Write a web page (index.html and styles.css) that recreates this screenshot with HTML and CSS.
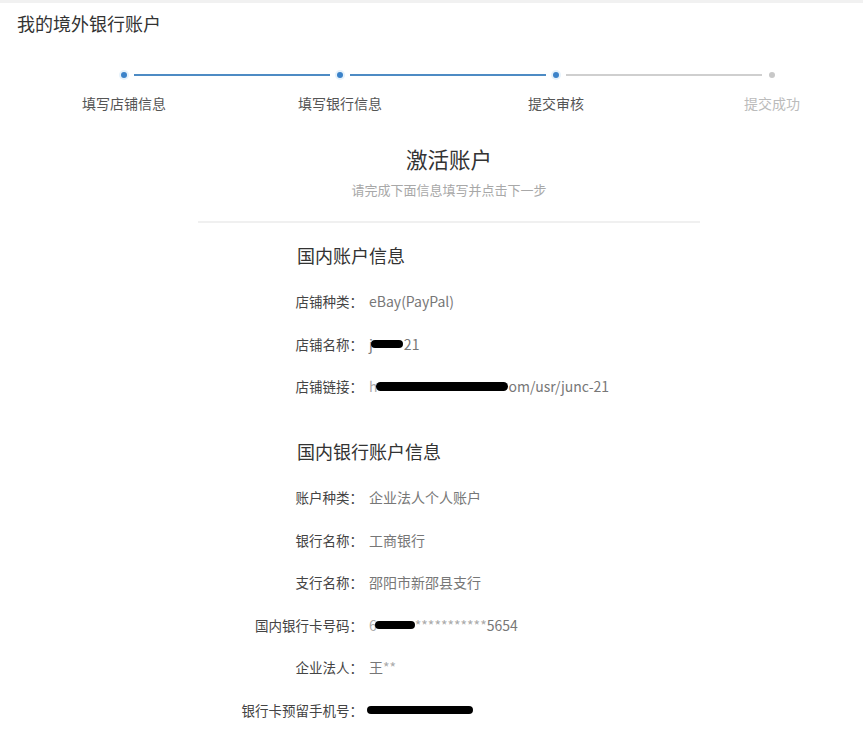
FILE: index.html
```html
<!DOCTYPE html>
<html lang="zh-CN">
<head>
<meta charset="utf-8">
<title>我的境外银行账户</title>
<link rel="stylesheet" href="styles.css">
</head>
<body>
<div class="page">
  <header class="page-head">我的境外银行账户</header>

  <div class="steps">
    <div class="track">
      <span class="dot done"></span>
      <span class="seg done"></span>
      <span class="dot done"></span>
      <span class="seg done"></span>
      <span class="dot done"></span>
      <span class="seg"></span>
      <span class="dot"></span>
    </div>
    <div class="labels">
      <span class="label">填写店铺信息</span>
      <span class="label">填写银行信息</span>
      <span class="label">提交审核</span>
      <span class="label todo">提交成功</span>
    </div>
  </div>

  <main class="main">
    <h1 class="title">激活账户</h1>
    <p class="subtitle">请完成下面信息填写并点击下一步</p>
    <div class="divider"></div>

    <section class="block">
      <h2 class="block-title">国内账户信息</h2>
      <div class="row"><span class="k">店铺种类：</span><span class="v">eBay(PayPal)</span></div>
      <div class="row"><span class="k">店铺名称：</span><span class="v">j<span class="blot b-name"></span>21</span></div>
      <div class="row"><span class="k">店铺链接：</span><span class="v"><span class="faint">h</span><span class="blot b-link"></span>om/usr/junc-21</span></div>
    </section>

    <section class="block second">
      <h2 class="block-title">国内银行账户信息</h2>
      <div class="row"><span class="k">账户种类：</span><span class="v">企业法人个人账户</span></div>
      <div class="row"><span class="k">银行名称：</span><span class="v">工商银行</span></div>
      <div class="row"><span class="k">支行名称：</span><span class="v">邵阳市新邵县支行</span></div>
      <div class="row"><span class="k">国内银行卡号码：</span><span class="v"><span class="faint">6</span><span class="blot b-card"></span><span class="stars">***********</span>5654</span></div>
      <div class="row"><span class="k">企业法人：</span><span class="v">王<span class="stars">**</span></span></div>
      <div class="row"><span class="k">银行卡预留手机号：</span><span class="v"><span class="blot b-phone"></span></span></div>
    </section>
  </main>
</div>
</body>
</html>
```
FILE: styles.css
```css
* { box-sizing: border-box; }
html, body { margin: 0; padding: 0; background: #fff; }
body {
  font-family: "Noto Sans CJK SC", "Microsoft YaHei", sans-serif;
  color: #333;
  width: 863px;
  height: 753px;
  overflow: hidden;
}
.page { border-top: 3px solid #f1f1f1; }

.page-head {
  font-size: 18px;
  line-height: 24px;
  padding: 8px 0 0 17px;
  color: #333;
  height: 40px;
}

.steps { margin-top: 28px; }
.track {
  display: flex;
  align-items: center;
  margin-left: 121px;
  width: 654px;
  height: 8px;
}
.dot {
  width: 6px;
  height: 6px;
  border-radius: 50%;
  background: #c8c8c8;
  flex: none;
}
.dot.done { background: #3b82c9; box-shadow: 0 0 0 2px #e6f2fb; }
.seg {
  flex: 1;
  height: 2px;
  margin: 0 7px;
  background: #cfcfcf;
}
.seg.done { background: #4d8bc4; }

.labels {
  display: grid;
  grid-template-columns: repeat(4, 216px);
  margin-left: 16px;
  margin-top: 14px;
  font-size: 14px;
  line-height: 20px;
  color: #555;
}
.label { text-align: center; white-space: nowrap; }
.label.todo { color: #bbb; }

.main {
  margin-left: 198px;
  width: 502px;
  margin-top: 31px;
}
.title {
  margin: 0;
  text-align: center;
  font-size: 21.5px;
  font-weight: normal;
  line-height: 30px;
  color: #333;
}
.subtitle {
  margin: 6px 0 0;
  text-align: center;
  font-size: 13px;
  line-height: 20px;
  color: #a8a8a8;
}
.divider {
  height: 2px;
  background: #f0f0f0;
  margin-top: 21px;
}

.block { padding-top: 20px; }
.block.second { padding-top: 31px; }
.block-title {
  margin: 0 0 13px 99px;
  font-size: 18px;
  font-weight: normal;
  line-height: 24px;
  color: #333;
}
.row {
  display: flex;
  align-items: center;
  height: 42.6px;
}
.k {
  width: 165px;
  flex: none;
  text-align: right;
  font-size: 13.5px;
  color: #444;
  white-space: nowrap;
}
.v {
  padding-left: 6px;
  font-size: 14px;
  color: #777;
  white-space: nowrap;
  display: inline-flex;
  align-items: center;
}
.faint { color: #aaa; }
.stars { color: #aaa; }
.blot {
  display: inline-block;
  background: #000;
  border-radius: 6px;
  height: 8px;
}
.b-name { width: 32px; margin: 0 1px 0 -2px; }
.b-link { width: 132px; height: 9px; margin: 0 1px 0 -2px; }
.b-card { width: 40px; margin: 0 0 0 -2px; }
.b-phone { width: 106px; margin-left: -2px; }
```
